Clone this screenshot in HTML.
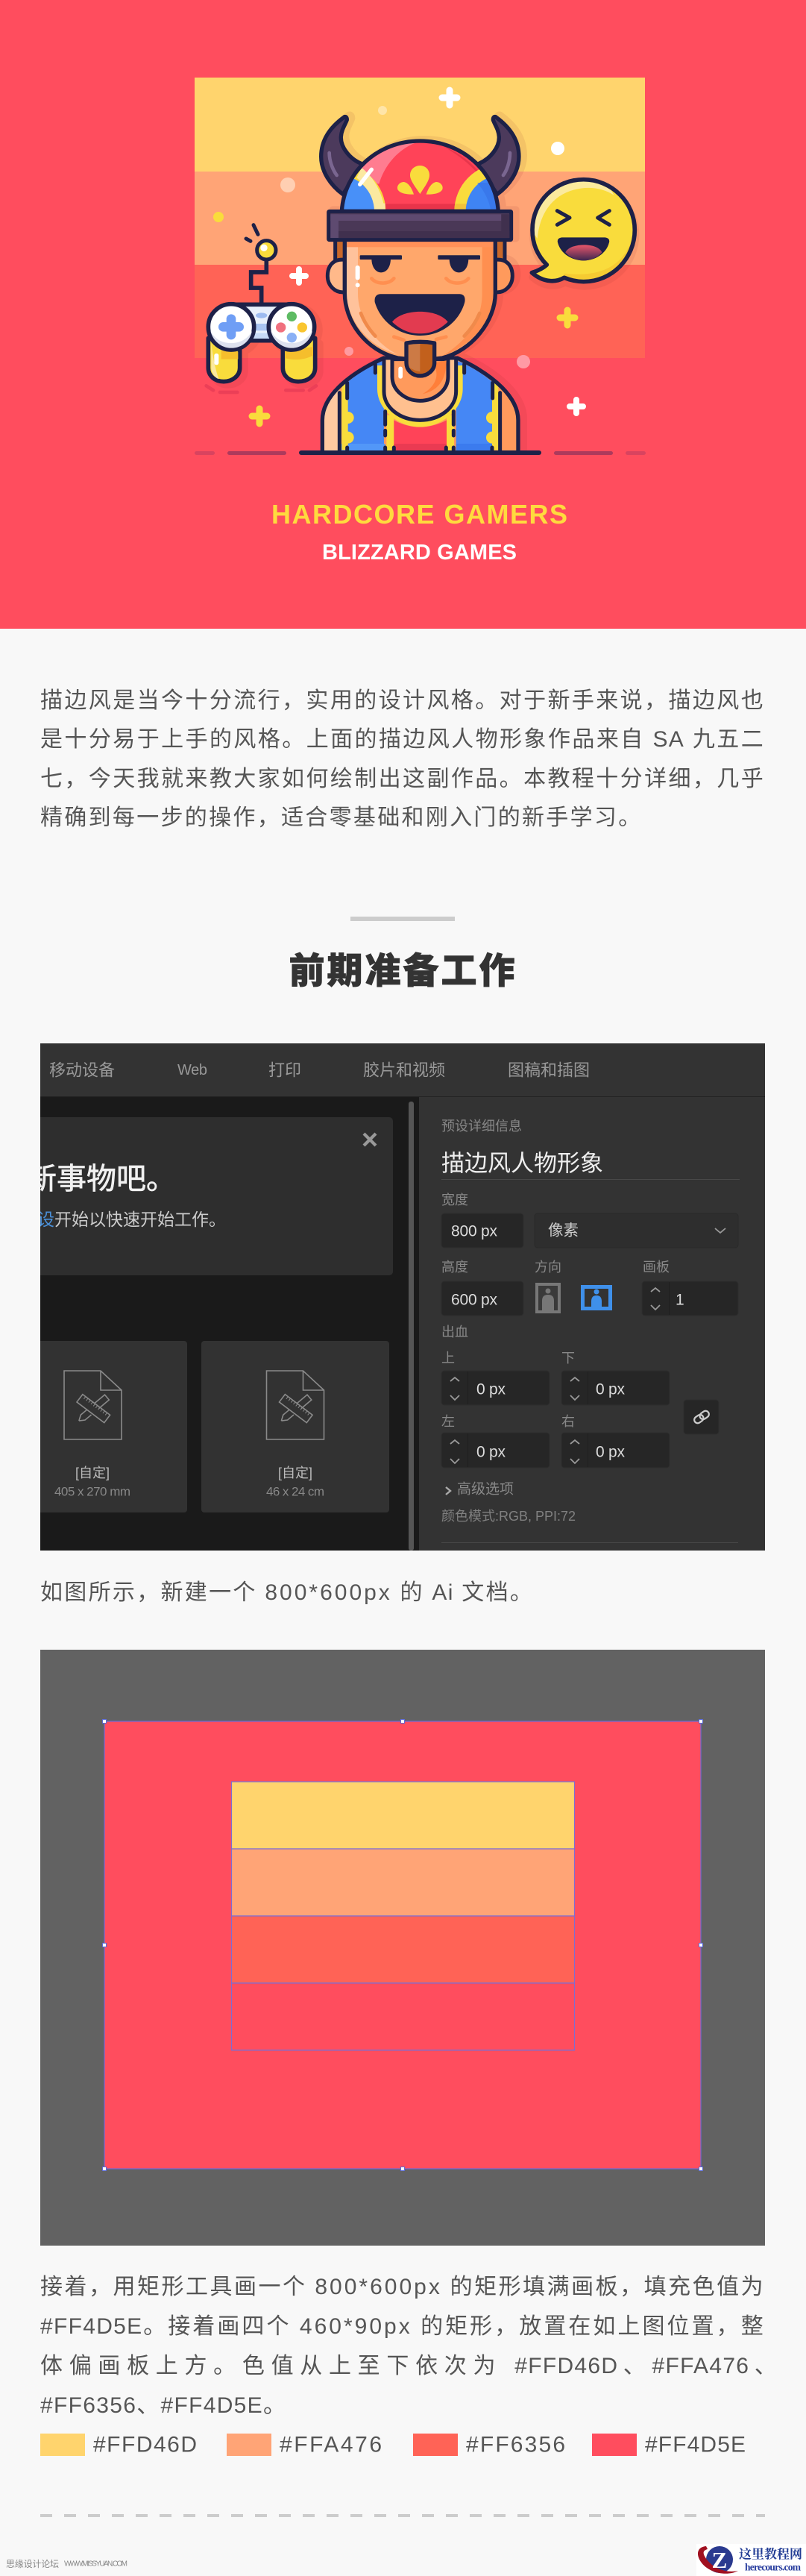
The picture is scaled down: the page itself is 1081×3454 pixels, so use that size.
<!DOCTYPE html>
<html lang="zh-CN">
<head>
<meta charset="utf-8">
<title>描边风人物形象教程</title>
<style>
html,body{margin:0;padding:0;background:#f8f8f8}
#p{position:relative;width:1081px;height:3454px;overflow:hidden;background:#f8f8f8;font-family:"Liberation Sans","Noto Sans CJK SC",sans-serif}
#art{position:absolute;left:0;top:0}
.l{position:absolute;left:54px;width:972px;height:52px;line-height:52px;font-size:30px;letter-spacing:2.3px;color:#555;text-align:justify;text-align-last:justify;font-family:"Liberation Sans","Noto Sans CJK SC",sans-serif}
.n{text-align:left;text-align-last:left;white-space:nowrap}
.a{letter-spacing:1.3px}
.b{letter-spacing:3px}
.h{position:absolute;left:0;width:1081px;top:1266px;text-align:center;font-size:48px;line-height:62px;font-weight:900;color:#333;letter-spacing:3px;-webkit-text-stroke:.8px #333;font-family:"Noto Sans CJK SC","Liberation Sans",sans-serif}
svg text{font-family:"Liberation Sans","Noto Sans CJK SC",sans-serif}
</style>
</head>
<body>
<div id="p">
<svg id="art" width="1081" height="3454" viewBox="0 0 1081 3454" xmlns="http://www.w3.org/2000/svg">
<defs>
<clipPath id="domeClip"><path d="M175 460C185 300 320 177 490 177C660 177 795 300 805 460Z"/></clipPath>
<clipPath id="scr"><rect x="54" y="1399" width="972" height="680"/></clipPath>
<clipPath id="emo"><path d="M130 435C85 390 72 340 72 295C72 180 165 92 278 92C392 92 484 185 484 295C484 410 392 503 278 503C250 503 225 497 200 487C170 505 120 510 70 467C95 460 120 445 130 435Z"/></clipPath>
<linearGradient id="tg" x1="0" y1="0" x2="0" y2="1"><stop offset="0" stop-color="#E8566A"/><stop offset="1" stop-color="#3D2650"/></linearGradient>
<g id="doc" fill="none" stroke="#8a8a8a" stroke-width="1.6">
<path d="M0 0H49L77 26V92H0Z"/><path d="M49 0V26H77"/>
<g transform="translate(39 51) rotate(37)"><rect x="-23" y="-7" width="46" height="13"/><path d="M-18-7v4M-14-7v4M-10-7v4M-6-7v4M-2-7v4M2-7v4M6-7v4M10-7v4M14-7v4M18-7v4" stroke-width="1"/></g>
<g transform="translate(39 51) rotate(-40)"><path d="M-25 0L-18-4.500H-7M-25 0L-18 4.500H-7M6-4.500H24V4.500H6"/></g>
</g>
</defs>

<!-- HERO -->
<rect width="1081" height="843" fill="#FF4D5E"/>
<rect x="261" y="104" width="604" height="126" fill="#FFD46D"/>
<rect x="261" y="230" width="604" height="125" fill="#FFA476"/>
<rect x="261" y="355" width="604" height="125" fill="#FF6356"/>

<!-- shadows -->
<g fill="#8E2C2C" stroke="#8E2C2C" opacity=".1" stroke-width="30" stroke-linejoin="round">
<g transform="translate(406 128) scale(.3333)">
<path d="M186 80C130 120 92 170 92 240C92 300 130 355 180 392L258 270C205 250 170 200 172 160C174 130 190 110 196 92Q196 78 186 80Z"/>
<path d="M794 80C850 120 888 170 888 240C888 300 850 355 800 392L722 270C775 250 810 200 808 160C806 130 790 110 784 92Q784 78 794 80Z"/>
<path d="M175 460C185 300 320 177 490 177C660 177 795 300 805 460Z"/>
<rect x="122" y="460" width="735" height="115"/>
<path d="M187 575L187 790C187 900 270 1020 400 1050L490 1060L580 1050C700 1020 793 900 793 790L793 575Z"/>
<path d="M793 655C840 650 862 680 862 720C862 760 830 790 793 785Z"/>
</g>
<g transform="translate(407 398) scale(.3333)"><path d="M97 620L97 490C97 400 190 310 345 240L640 240C790 310 885 400 885 490L885 620Z"/></g>
<g transform="translate(256 284) scale(.3333)">
<path d="M88 530L88 640C88 672 115 695 150 695C185 695 215 672 215 640L215 540Z"/><path d="M388 540L388 640C388 672 415 695 450 695C490 695 518 672 518 640L518 530Z"/>
<circle cx="180" cy="475" r="92"/><circle cx="423" cy="475" r="92"/>
</g>
<g transform="translate(691 216) scale(.3333)"><path d="M130 435C85 390 72 340 72 295C72 180 165 92 278 92C392 92 484 185 484 295C484 410 392 503 278 503C250 503 225 497 200 487C170 505 120 510 70 467C95 460 120 445 130 435Z"/></g>
</g>

<!-- dots -->
<circle cx="513" cy="148" r="6" fill="#FFE5A8"/>
<circle cx="748" cy="199" r="9" fill="#fff"/>
<circle cx="386" cy="248" r="10" fill="#FFCFB2"/>
<circle cx="293" cy="291" r="7" fill="#F9DC3C"/>
<circle cx="468" cy="471" r="6" fill="#FF9AA0"/>
<circle cx="702" cy="485" r="9" fill="#FF9AA4"/>
<!-- sparkles -->
<g stroke-linecap="round" fill="none">
<path d="M603 121V141M593 131H613" stroke="#fff" stroke-width="9"/>
<path d="M401 361V379M392 370H410" stroke="#fff" stroke-width="8"/>
<path d="M773 536V554M764 545H782" stroke="#fff" stroke-width="8"/>
<path d="M761 416V436M751 426H771" stroke="#F9DC3C" stroke-width="9"/>
<path d="M348 548V568M338 558H358" stroke="#F9DC3C" stroke-width="9"/>
</g>

<!-- ground -->
<rect x="261" y="605" width="27" height="5" rx="2.500" fill="#D9435F"/>
<rect x="305" y="605" width="79" height="5" rx="2.500" fill="#AD3A5C"/>
<rect x="743" y="605" width="79" height="5" rx="2.500" fill="#AD3A5C"/>
<rect x="839" y="605" width="27" height="5" rx="2.500" fill="#D9435F"/>

<!-- BODY (zoom8 coords) -->
<g transform="translate(400 400) scale(.3333)" stroke-linecap="round" stroke-linejoin="round">
<path d="M97 620L97 490C97 400 190 310 345 240L640 240C790 310 885 400 885 490L885 620Z" fill="#FF9A5C"/>
<path d="M97 620L97 490C97 430 125 380 165 345L165 620Z" fill="#FFC9A0"/>
<path d="M195 340C240 300 300 265 345 250L345 610L195 610Z" fill="#4587F5"/>
<path d="M785 340C740 300 680 265 635 250L635 610L785 610Z" fill="#4587F5"/>
<rect x="170" y="585" width="180" height="27" fill="#5297F8"/><rect x="635" y="585" width="150" height="27" fill="#3B7BEE"/>
<path d="M175 350L200 335V610H175Z" fill="#F9DC3C"/><path d="M780 335L805 350V610H780Z" fill="#F9DC3C"/>
<circle cx="200" cy="480" r="24" fill="#F9DC3C"/><circle cx="200" cy="560" r="24" fill="#F9DC3C"/>
<circle cx="780" cy="480" r="24" fill="#F9DC3C"/><circle cx="780" cy="560" r="24" fill="#F9DC3C"/>
<path d="M318 270L318 365C318 445 400 518 490 518C580 518 662 445 662 365L662 270Z" fill="#F9DC3C"/>
<rect x="355" y="470" width="30" height="142" fill="#F9DC3C"/><rect x="597" y="470" width="30" height="142" fill="#F9DC3C"/>
<path d="M385 490C420 510 460 518 490 518C520 518 560 510 597 490L597 612L385 612Z" fill="#FF4358"/>
<rect x="385" y="585" width="212" height="27" fill="#EA3A52"/>
<path d="M345 240L345 375C345 440 410 490 490 490C570 490 635 440 635 375L635 240Z" fill="#FFC08F" stroke="#1D2148" stroke-width="15"/>
<path d="M378 245L378 315C378 370 430 412 490 412C550 412 603 370 603 315L603 245Z" fill="#FF9A5C" stroke="#1D2148" stroke-width="15"/>
<path d="M540 260C570 300 560 350 500 385C570 370 596 320 596 250Z" fill="#FF7F3A"/>
<rect x="403" y="275" width="17" height="48" rx="8" fill="#fff"/>
<path d="M97 620L97 490C97 400 190 310 345 240M640 240C790 310 885 400 885 490L885 620" fill="none" stroke="#1D2148" stroke-width="16"/>
<g fill="none" stroke="#1D2148" stroke-width="15">
<path d="M166 380V612M812 380V612M197 340V402M782 340V402M310 265V300M668 265V300"/>
<path d="M350 455V508M350 532V552M350 600V610M625 455V508M625 532V552M625 600V610M197 600V610M385 600V610M595 600V610M780 600V610"/>
</g>
</g>

<!-- HEAD (zoom7 coords) -->
<g transform="translate(400 130) scale(.3333)" stroke-linecap="round" stroke-linejoin="round">
<path d="M186 80C130 120 92 170 92 240C92 300 130 355 180 392L258 270C205 250 170 200 172 160C174 130 190 110 196 92Q196 78 186 80Z" fill="#4C3A5C" stroke="#1D2148" stroke-width="16"/>
<path d="M794 80C850 120 888 170 888 240C888 300 850 355 800 392L722 270C775 250 810 200 808 160C806 130 790 110 784 92Q784 78 794 80Z" fill="#4C3A5C" stroke="#1D2148" stroke-width="16"/>
<path d="M125 225C125 260 140 295 155 315" fill="none" stroke="#7A6690" stroke-width="14"/>
<path d="M852 225C852 260 840 295 825 315" fill="none" stroke="#7A6690" stroke-width="14"/>
<path d="M175 460C185 300 320 177 490 177C660 177 795 300 805 460Z" fill="#FF4358"/>
<g clip-path="url(#domeClip)">
<path d="M225 330C280 230 380 185 490 178C400 205 345 280 325 350Z" fill="#FF7C90"/>
<path d="M570 190C660 230 720 280 745 330L715 300C670 250 620 220 570 190Z" fill="#E8364C"/>
<rect x="340" y="430" width="300" height="30" fill="#E8344A"/>
<circle cx="160" cy="460" r="192" fill="#F9DC3C"/>
<path d="M255 285C300 320 330 370 345 435L305 445C290 390 265 350 235 325Z" fill="#FBE9A0"/>
<rect x="305" y="428" width="45" height="32" fill="#FBE9A0"/>
<circle cx="160" cy="460" r="146" fill="#4890F8"/>
<circle cx="820" cy="460" r="192" fill="#F9DC3C"/>
<rect x="630" y="430" width="50" height="30" fill="#F2C23A"/>
<circle cx="820" cy="460" r="146" fill="#3F84F4"/>
<path d="M720 345C750 380 770 420 775 460H810V345Z" fill="#3470E4" opacity=".55"/>
</g>
<path d="M175 460C185 300 320 177 490 177C660 177 795 300 805 460Z" fill="none" stroke="#1D2148" stroke-width="16"/>
<path d="M248 352L295 292" stroke="#fff" stroke-width="16" fill="none"/>
<path d="M490 390C470 360 450 335 450 315C450 290 470 276 490 276C510 276 528 290 528 315C528 335 510 360 490 390Z" fill="#F9DC3C"/>
<path d="M465 392C440 392 410 390 400 372C395 355 410 342 425 342C445 345 458 370 465 392Z" fill="#F9DC3C"/>
<path d="M515 392C540 392 570 390 580 372C585 355 570 342 555 342C535 345 522 370 515 392Z" fill="#F9DC3C"/>
<rect x="150" y="570" width="32" height="90" fill="#C9682A"/><rect x="798" y="570" width="32" height="90" fill="#C9682A"/>
<path d="M149 575V660M831 575V660" stroke="#1D2148" stroke-width="15" fill="none"/>
<path d="M187 655C140 650 118 680 118 720C118 760 150 790 187 785Z" fill="#FFB98A" stroke="#1D2148" stroke-width="15"/>
<path d="M793 655C840 650 862 680 862 720C862 760 830 790 793 785Z" fill="#FF9A5C" stroke="#1D2148" stroke-width="15"/>
<path d="M187 575L187 790C187 900 270 1020 400 1050L490 1060L580 1050C700 1020 793 900 793 790L793 575Z" fill="#FFA76B"/>
<path d="M195 585H240V790C240 900 320 1000 400 1035C290 1010 195 900 195 790Z" fill="#FFC29B"/>
<path d="M740 600H785V790C785 900 700 1000 580 1042C680 980 740 900 740 790Z" fill="#FF8F50"/>
<rect x="195" y="582" width="590" height="22" fill="#FF9158"/>
<path d="M187 575L187 790C187 900 270 1020 400 1050L490 1060L580 1050C700 1020 793 900 793 790L793 575" fill="none" stroke="#1D2148" stroke-width="16"/>
<g fill="none" stroke-width="14">
<path d="M252 870C265 905 285 935 310 962" stroke="#F08A4B"/>
<path d="M730 870C715 905 695 935 668 962" stroke="#F08A4B"/>
<path d="M385 965L425 978M555 975L595 965" stroke="#FF8F50"/>
<path d="M295 730C315 755 365 755 385 730M595 730C615 755 665 755 685 730" stroke="#FF8F50"/>
</g>
<rect x="122" y="460" width="735" height="115" rx="3" fill="#4A3857" stroke="#1D2148" stroke-width="15"/>
<rect x="130" y="472" width="687" height="26" fill="#5E4A70"/>
<rect x="130" y="472" width="32" height="95" fill="#5E4A70"/>
<rect x="162" y="540" width="688" height="27" fill="#40304E"/>
<rect x="817" y="472" width="33" height="95" fill="#40304E"/>
<rect x="248" y="637" width="169" height="17" rx="3" fill="#1D2148"/>
<rect x="562" y="637" width="170" height="17" rx="3" fill="#1D2148"/>
<path d="M295 650C295 725 372 725 372 650Z" fill="#1D2148"/>
<path d="M608 650C608 725 685 725 685 650Z" fill="#1D2148"/>
<rect x="230" y="678" width="18" height="58" rx="8" fill="#fff"/><circle cx="239" cy="757" r="9" fill="#fff"/>
<path d="M330 793L650 793Q675 795 670 825C650 900 580 960 490 960C400 960 330 900 308 825Q305 795 330 793Z" fill="#1D2148"/>
<path d="M378 905C420 850 560 850 602 905C560 945 520 952 490 952C460 952 420 945 378 905Z" fill="#E23B50"/>
<path d="M435 990Q490 980 548 990L548 1070C548 1100 520 1122 490 1122C460 1122 435 1100 435 1070Z" fill="#C2601C"/>
<path d="M435 990Q462 984 490 984V1105L470 1100C450 1090 435 1085 435 1070Z" fill="#CC7A45"/>
<path d="M435 990Q490 980 548 990L548 1070C548 1100 520 1122 490 1122C460 1122 435 1100 435 1070Z" fill="none" stroke="#1D2148" stroke-width="16"/>
</g>
<!-- ground line -->
<rect x="401" y="604" width="325" height="6" rx="3" fill="#1D2148"/>

<!-- CONTROLLER (zoom9 coords) -->
<g transform="translate(250 280) scale(.3333)" stroke-linecap="round" stroke-linejoin="round">
<path d="M80 712L108 730M135 738H205M400 730H470M495 730L522 712" stroke="#EC3F57" stroke-width="14" fill="none"/>
<path d="M322 205V255H260V318H302V385" fill="none" stroke="#1D2148" stroke-width="17" stroke-linejoin="miter"/>
<circle cx="322" cy="166" r="38" fill="#F9DC3C" stroke="#1D2148" stroke-width="15"/>
<circle cx="312" cy="157" r="14" fill="#fff"/>
<path d="M270 65L288 103M240 120L258 130" stroke="#1D2148" stroke-width="15" fill="none"/>
<path d="M88 520L88 640C88 672 115 695 150 695C185 695 215 672 215 640L215 530Z" fill="#F9DC3C" stroke="#1D2148" stroke-width="17"/>
<path d="M388 530L388 640C388 672 415 695 450 695C490 695 518 672 518 640L518 520Z" fill="#F9DC3C" stroke="#1D2148" stroke-width="17"/>
<path d="M100 540V640C100 660 115 680 130 685C115 640 105 590 100 540Z" fill="#FBE9A0"/>
<rect x="112" y="582" width="18" height="46" rx="8" fill="#fff"/>
<path d="M140 570L208 575V605H140Z" fill="#F5BE2C"/><path d="M396 572L510 555V590C470 610 430 610 396 600Z" fill="#F5BE2C"/>
<rect x="195" y="385" width="215" height="145" fill="#E8F0FC" stroke="#1D2148" stroke-width="17"/>
<rect x="265" y="462" width="70" height="28" fill="#A9C4F2"/><rect x="265" y="500" width="70" height="22" fill="#C8DAF7"/>
<ellipse cx="302" cy="429" rx="23" ry="11" fill="#9DBBF0"/>
<circle cx="180" cy="475" r="92" fill="#fff" stroke="#1D2148" stroke-width="17"/>
<circle cx="423" cy="475" r="92" fill="#fff" stroke="#1D2148" stroke-width="17"/>
<path d="M97 490C105 530 140 560 180 560C225 560 258 530 264 490C250 520 220 540 180 540C140 540 110 520 97 490Z" fill="#DDE1EE"/>
<path d="M340 490C348 530 385 560 423 560C465 560 500 530 507 490C490 520 460 540 423 540C385 540 355 520 340 490Z" fill="#DDE1EE"/>
<path d="M180 443V507M148 475H212" stroke="#6F9EF5" stroke-width="38" fill="none"/>
<circle cx="424" cy="433" r="20" fill="#5DBB63"/><circle cx="380" cy="477" r="20" fill="#F0707E"/>
<circle cx="466" cy="477" r="20" fill="#F9C52F"/><circle cx="424" cy="518" r="20" fill="#8AB0F5"/>
</g>

<!-- EMOJI (zoom10 coords) -->
<g transform="translate(690 210) scale(.3333)" stroke-linecap="round" stroke-linejoin="round">
<path d="M130 435C85 390 72 340 72 295C72 180 165 92 278 92C392 92 484 185 484 295C484 410 392 503 278 503C250 503 225 497 200 487C170 505 120 510 70 467C95 460 120 445 130 435Z" fill="#F9DC3C"/>
<g clip-path="url(#emo)">
<path d="M72 300C72 170 180 80 300 92C360 100 390 130 400 155C340 115 250 115 180 160C130 195 100 250 92 330Z" fill="#FBEA9E"/>
<path d="M475 320C450 420 370 490 200 470L190 510H400L490 400Z" fill="#F5CB32"/>
</g>
<path d="M130 435C85 390 72 340 72 295C72 180 165 92 278 92C392 92 484 185 484 295C484 410 392 503 278 503C250 503 225 497 200 487C170 505 120 510 70 467C95 460 120 445 130 435Z" fill="none" stroke="#1D2148" stroke-width="17"/>
<path d="M172 218L222 246L172 274M382 218L335 246L382 274" fill="none" stroke="#1D2148" stroke-width="15"/>
<path d="M190 325L365 325Q385 328 381 345C370 390 325 418 278 418C230 418 185 390 174 345Q170 328 190 325Z" fill="#1D2148"/>
<path d="M205 385C225 345 335 345 352 385C330 410 300 418 278 418C255 418 225 408 205 385Z" fill="url(#tg)"/>
</g>

<text x="364" y="702" font-size="36" font-weight="700" fill="#FFDA3E" textLength="397" lengthAdjust="spacing">HARDCORE GAMERS</text>
<text x="432" y="750" font-size="29" font-weight="700" fill="#ffffff" textLength="261" lengthAdjust="spacing">BLIZZARD GAMES</text>

<!-- divider -->
<rect x="470" y="1229" width="140" height="6" fill="#ccc"/>

<!-- DARK SCREENSHOT -->
<g clip-path="url(#scr)">
<rect x="54" y="1399" width="972" height="680" fill="#1a1a1a"/>
<rect x="54" y="1399" width="972" height="71" fill="#333"/>
<rect x="54" y="1470" width="972" height="1" fill="#222"/>
<rect x="548" y="1477" width="7" height="602" rx="3" fill="#555"/>
<rect x="562" y="1471" width="464" height="608" fill="#333"/>

<g fill="#999" font-size="22" dominant-baseline="central">
<text x="66" y="1435" dominant-baseline="central">移动设备</text>
<text x="238" y="1435" font-size="20" textLength="40" dominant-baseline="central">Web</text>
<text x="360" y="1435" dominant-baseline="central">打印</text>
<text x="487" y="1435" dominant-baseline="central">胶片和视频</text>
<text x="681" y="1435" dominant-baseline="central">图稿和插图</text>
</g>

<rect x="30" y="1498" width="497" height="212" rx="5" fill="#2e2e2e"/>
<path d="M488 1520L504 1536M504 1520L488 1536" stroke="#999" stroke-width="4.200" fill="none"/>
<text x="36" y="1581" font-size="40" fill="#f0f0f0" stroke="#f0f0f0" stroke-width=".7" dominant-baseline="central">新事物吧。</text>
<text x="50" y="1635" font-size="23" fill="#4a90d9" dominant-baseline="central">设</text>
<text x="73" y="1635" font-size="23" fill="#ccc" dominant-baseline="central">开始以快速开始工作。</text>

<rect x="30" y="1798" width="221" height="230" rx="4" fill="#323232"/>
<rect x="270" y="1798" width="252" height="230" rx="4" fill="#323232"/>
<use href="#doc" x="86" y="1838"/>
<use href="#doc" x="357.500" y="1838"/>
<text x="124" y="1975" font-size="18" fill="#bbb" text-anchor="middle" dominant-baseline="central">[自定]</text>
<text x="124" y="2000" font-size="17" fill="#888" text-anchor="middle" dominant-baseline="central" textLength="102">405 x 270 mm</text>
<text x="396" y="1975" font-size="18" fill="#bbb" text-anchor="middle" dominant-baseline="central">[自定]</text>
<text x="396" y="2000" font-size="17" fill="#888" text-anchor="middle" dominant-baseline="central" textLength="78">46 x 24 cm</text>

<g font-size="18" fill="#888">
<text x="592" y="1510" dominant-baseline="central">预设详细信息</text>
<text x="592" y="1609" dominant-baseline="central">宽度</text>
<text x="592" y="1699" dominant-baseline="central">高度</text>
<text x="717" y="1699" dominant-baseline="central">方向</text>
<text x="862" y="1699" dominant-baseline="central">画板</text>
<text x="592" y="1786" dominant-baseline="central">出血</text>
<text x="592" y="1821" dominant-baseline="central">上</text>
<text x="753" y="1821" dominant-baseline="central">下</text>
<text x="592" y="1906" dominant-baseline="central">左</text>
<text x="753" y="1906" dominant-baseline="central">右</text>
<text x="613" y="1997" font-size="19" dominant-baseline="central">高级选项</text>
<text x="592" y="2033" fill="#808080" dominant-baseline="central">颜色模式:RGB, PPI:72</text>
</g>
<text x="592" y="1560" font-size="31" fill="#eee" dominant-baseline="central">描边风人物形象</text>
<rect x="592" y="1581" width="400" height="1" fill="#484848"/>
<rect x="592" y="2068" width="398" height="1" fill="#484848"/>

<g fill="#262626" stroke="#2e2e2e">
<rect x="592" y="1627" width="110" height="46" rx="4"/>
<rect x="592" y="1718" width="110" height="46" rx="4"/>
<rect x="861" y="1718" width="129" height="46" rx="4"/>
<rect x="592" y="1838" width="145" height="46" rx="4"/>
<rect x="753" y="1838" width="145" height="46" rx="4"/>
<rect x="592" y="1921" width="145" height="47" rx="4"/>
<rect x="753" y="1921" width="145" height="47" rx="4"/>
<rect x="917" y="1877" width="47" height="46" rx="4"/>
</g>
<rect x="717" y="1627" width="273" height="46" rx="4" fill="#2e2e2e" stroke="#2a2a2a"/>
<g fill="#1f1f1f"><rect x="897" y="1719" width="1" height="44"/><rect x="627" y="1839" width="1" height="44"/><rect x="788" y="1839" width="1" height="44"/><rect x="627" y="1922" width="1" height="45"/><rect x="788" y="1922" width="1" height="45"/></g>
<g fill="#ddd" font-size="21">
<text x="605" y="1651" dominant-baseline="central" textLength="62">800 px</text>
<text x="605" y="1743" dominant-baseline="central" textLength="62">600 px</text>
<text x="906" y="1743" dominant-baseline="central">1</text>
<text x="639" y="1863" dominant-baseline="central" textLength="39">0 px</text>
<text x="799" y="1863" dominant-baseline="central" textLength="39">0 px</text>
<text x="639" y="1947" dominant-baseline="central" textLength="39">0 px</text>
<text x="799" y="1947" dominant-baseline="central" textLength="39">0 px</text>
<text x="735" y="1650" dominant-baseline="central" fill="#ccc" font-size="20.500">像素</text>
</g>
<g fill="none" stroke="#999" stroke-width="1.800">
<path d="M959 1647L966 1653L973 1647"/>
<path d="M873 1732L879 1727L885 1732M873 1750L879 1756L885 1750"/>
<path d="M604 1852L610 1847L616 1852M604 1871L610 1877L616 1871"/>
<path d="M765 1852L771 1847L777 1852M765 1871L771 1877L777 1871"/>
<path d="M604 1936L610 1931L616 1936M604 1956L610 1962L616 1956"/>
<path d="M765 1936L771 1931L777 1936M765 1956L771 1962L777 1956"/>
<path d="M598 1994L604 1999L598 2004" stroke-width="2.400" stroke="#aaa"/>
</g>
<!-- portrait / landscape -->
<rect x="720" y="1722" width="30" height="37" fill="#3a3a3a" stroke="#777" stroke-width="4"/>
<circle cx="735" cy="1731" r="3.500" fill="#777"/><path d="M727 1759V1744Q727 1736 735 1736Q743 1736 743 1744V1759Z" fill="#777"/>
<rect x="781.500" y="1725.500" width="37" height="29" fill="#333" stroke="#3F90EA" stroke-width="5"/>
<circle cx="800" cy="1732" r="3.500" fill="#3F90EA"/><path d="M793 1755V1745Q793 1737 800 1737Q807 1737 807 1745V1755Z" fill="#3F90EA"/>
<!-- link -->
<g transform="translate(941 1900) rotate(-35)" fill="none" stroke="#ccc" stroke-width="2.200"><rect x="-11" y="-4.500" width="13" height="9" rx="4.500"/><rect x="-2" y="-4.500" width="13" height="9" rx="4.500"/></g>
</g>

<!-- ARTBOARD -->
<rect x="54" y="2212" width="972" height="799" fill="#626262"/>
<rect x="140" y="2308" width="800" height="600" fill="#FF4D5E" stroke="#6A6AD8" stroke-width="1.200"/>
<g stroke="#7D6DD1" stroke-width="1.200">
<rect x="310.500" y="2389" width="460" height="90" fill="#FFD46D"/>
<rect x="310.500" y="2479" width="460" height="90" fill="#FFA476"/>
<rect x="310.500" y="2569" width="460" height="90" fill="#FF6356"/>
<rect x="310.500" y="2659" width="460" height="90" fill="#FF4D5E"/>
</g>
<g fill="#fff" stroke="#5A6AD8" stroke-width="1">
<rect x="137.500" y="2305.500" width="5" height="5"/><rect x="537.500" y="2305.500" width="5" height="5"/><rect x="937.500" y="2305.500" width="5" height="5"/>
<rect x="137.500" y="2605.500" width="5" height="5"/><rect x="937.500" y="2605.500" width="5" height="5"/>
<rect x="137.500" y="2905.500" width="5" height="5"/><rect x="537.500" y="2905.500" width="5" height="5"/><rect x="937.500" y="2905.500" width="5" height="5"/>
</g>

<!-- swatches -->
<rect x="54" y="3263" width="60" height="30" fill="#FFD46D"/>
<rect x="304" y="3263" width="60" height="30" fill="#FFA476"/>
<rect x="554" y="3263" width="60" height="30" fill="#FF6356"/>
<rect x="794" y="3263" width="60" height="30" fill="#FF4D5E"/>
<g font-size="30" fill="#555">
<text x="125" y="3278" dominant-baseline="central" textLength="139">#FFD46D</text>
<text x="375" y="3278" dominant-baseline="central" textLength="137">#FFA476</text>
<text x="625" y="3278" dominant-baseline="central" textLength="133">#FF6356</text>
<text x="865" y="3278" dominant-baseline="central" textLength="135">#FF4D5E</text>
</g>

<!-- dashes -->
<path d="M54 3373H1026" stroke="#ccc" stroke-width="4" stroke-dasharray="16 16" fill="none"/>

<!-- watermarks -->
<text x="8" y="3438" font-size="12" fill="#888" dominant-baseline="central" textLength="71">思缘设计论坛</text>
<text x="86" y="3438" font-size="10" fill="#888" dominant-baseline="central" textLength="85">WWW.MISSYUAN.COM</text>
<rect x="934" y="3411" width="147" height="43" fill="#fff"/>
<circle cx="965" cy="3432" r="18" fill="#2A3A8F"/>
<path d="M947 3414C935 3415 933 3425 940 3435C950 3450 975 3455 990 3447C975 3450 958 3445 948 3432C942 3424 942 3420 949 3418Z" fill="#A01020"/>
<text x="965" y="3443" font-size="31" font-weight="700" fill="#fff" text-anchor="middle" style="font-family:'Liberation Serif',serif">Z</text>
<text x="991" y="3425" font-size="17" font-weight="700" fill="#1F3A93" dominant-baseline="central" textLength="85" style="font-family:'Liberation Serif','Noto Serif CJK SC',serif">这里教程网</text>
<text x="999" y="3442" font-size="13.500" font-weight="700" fill="#2A3F9F" dominant-baseline="central" textLength="75" style="font-family:'Liberation Serif',serif">herecours.com</text>
</svg>

<div class="l" style="top:914px">描边风是当今十分流行&#65292;实用的设计风格。对于新手来说&#65292;描边风也</div>
<div class="l" style="top:966px">是十分易于上手的风格。上面的描边风人物形象作品来自 <span class="a">SA</span> 九五二</div>
<div class="l" style="top:1019px">七&#65292;今天我就来教大家如何绘制出这副作品。本教程十分详细&#65292;几乎</div>
<div class="l n" style="top:1071px">精确到每一步的操作&#65292;适合零基础和刚入门的新手学习。</div>

<div class="h">前期准备工作</div>

<div class="l n" style="top:2110px">如图所示&#65292;新建一个 <span class="b">800*600px</span> 的 <span class="a">Ai</span> 文档。</div>

<div class="l" style="top:3041px">接着&#65292;用矩形工具画一个 <span class="b">800*600px</span> 的矩形填满画板&#65292;填充色值为</div>
<div class="l" style="top:3094px"><span class="a">#FF4D5E</span>。接着画四个 <span class="b">460*90px</span> 的矩形&#65292;放置在如上图位置&#65292;整</div>
<div class="l" style="top:3147px;width:990px">体偏画板上方。色值从上至下依次为 <span class="a">#FFD46D</span>、<span class="a">#FFA476</span>、</div>
<div class="l n" style="top:3200px"><span class="a">#FF6356</span>、<span class="a">#FF4D5E</span>。</div>
</div>
</body>
</html>
